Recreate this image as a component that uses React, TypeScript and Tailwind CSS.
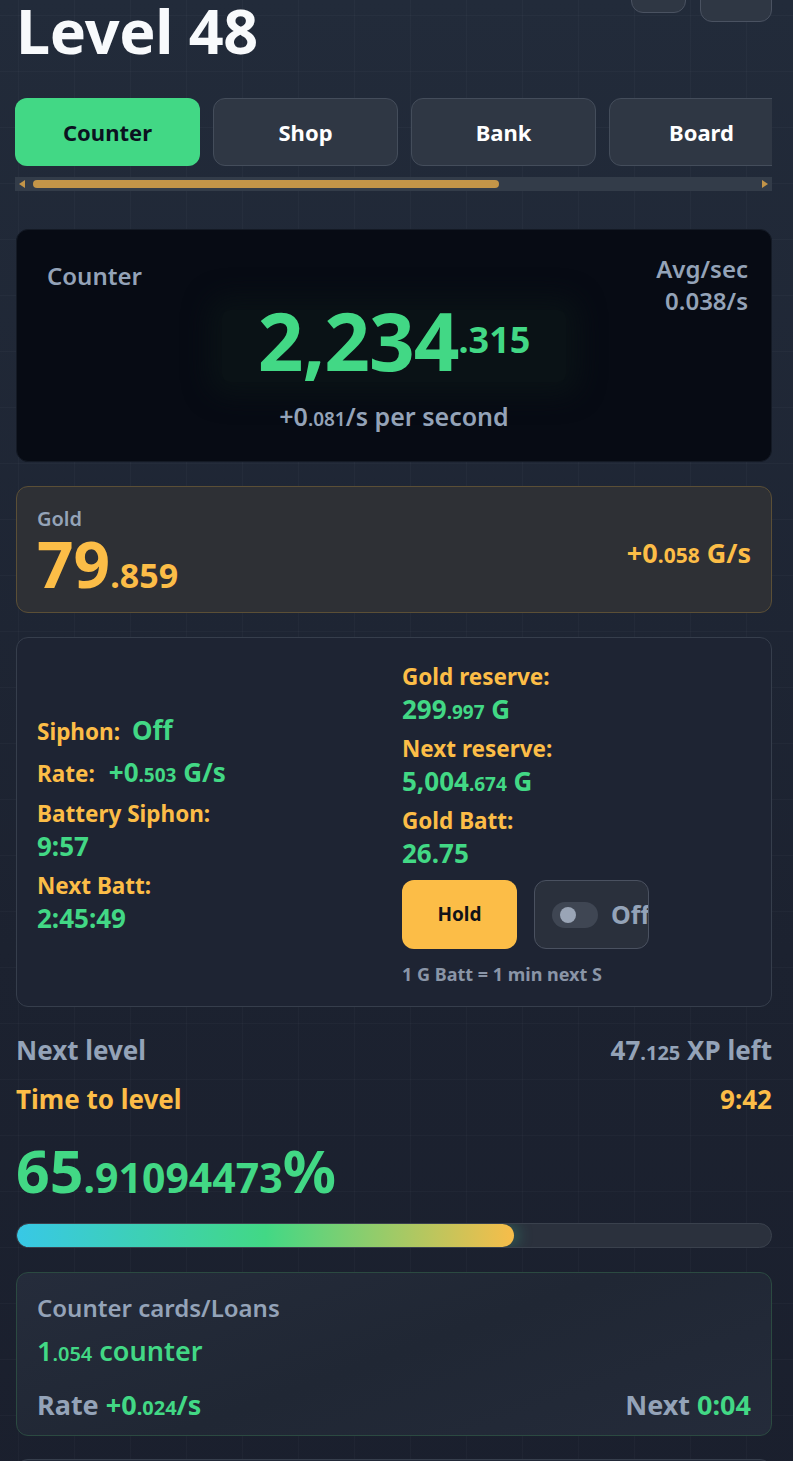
import React from "react";

const GREEN = "text-[#42d885]";
const GOLD = "text-[#fcbd47]";
const GRAY = "text-[#94a3b8]";

function Tab({ label, active }: { label: string; active?: boolean }) {
  return (
    <div
      className={
        active
          ? "shrink-0 w-[185px] h-[68px] rounded-xl bg-[#42d885] flex items-center justify-center text-[22px] font-bold text-[#0b1220]"
          : "shrink-0 w-[185px] h-[68px] rounded-xl bg-[#2f3744] border border-[#444d5b] flex items-center justify-center text-[22px] font-bold text-white"
      }
    >
      {label}
    </div>
  );
}

function Field({ label, children, last }: { label: string; children: React.ReactNode; last?: boolean }) {
  return (
    <div className={last ? "" : "mb-2"}>
      <div className={`${GOLD} text-[22.5px] font-bold leading-[32px] h-[32px]`}>{label}</div>
      <div className={`${GREEN} text-[26px] font-bold leading-[32px] h-[32px]`}>{children}</div>
    </div>
  );
}

function Small({ children, cls }: { children: React.ReactNode; cls: string }) {
  return <span className={`${cls} leading-none`}>{children}</span>;
}

export default function App() {
  return (
    <div
      className="min-h-screen w-full bg-[linear-gradient(180deg,#222b3a_0%,#1c2230_60%,#1a1f2d_100%)] overflow-hidden"
      style={{ fontFamily: '"Noto Sans", "Open Sans", sans-serif' }}
    >
      <div className="min-h-screen bg-[linear-gradient(rgba(255,255,255,0.022)_1px,transparent_1px),linear-gradient(90deg,rgba(255,255,255,0.022)_1px,transparent_1px)] bg-[size:56px_56px] bg-[position:18px_15px]">
        <div className="pl-4 pr-[21px]">
          {/* Header */}
          <div className="flex items-start justify-between">
            <h1 className="text-[61px] font-bold leading-none text-[#f8fafc] tracking-[-0.3px] whitespace-nowrap">Level 48</h1>
            <div className="flex items-start gap-[14px] -mt-[30px]">
              <div className="w-[55px] h-[43px] rounded-xl bg-[#2f3744] border border-[#4a5261]" />
              <div className="w-[72px] h-[52px] rounded-xl bg-[#2f3744] border border-[#4a5261]" />
            </div>
          </div>

          {/* Tabs */}
          <div className="mt-[37px] -ml-px overflow-hidden">
            <div className="flex gap-[13px] w-[757px] overflow-hidden">
              <Tab label="Counter" active />
              <Tab label="Shop" />
              <Tab label="Bank" />
              <Tab label="Board" />
            </div>
            <div className="mt-[11px] h-[14px] w-[757px] bg-[#333c49] flex items-center px-[4px]">
              <div className="w-0 h-0 border-y-[4px] border-y-transparent border-r-[6px] border-r-[#c39548]" />
              <div className="ml-[8px] w-[466px] h-[8px] rounded-full bg-[#c39548]" />
              <div className="flex-1" />
              <div className="w-0 h-0 border-y-[4px] border-y-transparent border-l-[6px] border-l-[#c39548]" />
            </div>
          </div>

          {/* Counter card */}
          <div className="mt-[38px] h-[233px] rounded-xl bg-[#070b14] border border-[#141a25] pl-[30px] pr-[23px] pt-[23px]">
            <div className="flex justify-between items-start">
              <div className={`${GRAY} text-[24px] font-semibold leading-[32px] mt-[7px]`}>Counter</div>
              <div className={`${GRAY} text-[24px] font-semibold leading-[32px] text-right`}>
                <div>Avg/sec</div>
                <div>0.038/s</div>
              </div>
            </div>
            <div className="flex justify-center -mt-[7px] pr-[7px]">
              <div className="px-[36px] h-[72px] flex items-end bg-[#0a1216] shadow-[0_0_24px_14px_#0a1216] rounded-lg">
                <span className={`${GREEN} text-[80px] font-bold leading-[84px] tracking-[-1px]`}>2,234</span>
                <span className={`${GREEN} text-[36px] font-bold leading-[84px]`}>.315</span>
              </div>
            </div>
            <div className={`${GRAY} text-center text-[25px] font-semibold leading-[32px] mt-[18px] pr-[7px]`}>
              +0<Small cls="text-[19px]">.081</Small>/s per second
            </div>
          </div>

          {/* Gold card */}
          <div className="mt-[24px] h-[127px] rounded-xl bg-[#2e3035] border border-[#5b4f36] pl-[20px] pr-[20px] pt-[19px] flex justify-between">
            <div>
              <div className={`${GRAY} text-[20px] font-semibold leading-[26px]`}>Gold</div>
              <div className={`${GOLD} font-bold leading-[64px]`}>
                <span className="text-[64px]">79</span>
                <Small cls="text-[34px]">.859</Small>
              </div>
            </div>
            <div className={`${GOLD} font-bold text-[27px] leading-[30px] mt-[32px]`}>
              +0<Small cls="text-[21px]">.058</Small> G/s
            </div>
          </div>

          {/* Siphon card */}
          <div className="mt-[24px] rounded-xl bg-[#1e2433] border border-[#363e4c] px-5 pt-[23px] pb-[22px] grid grid-cols-2 gap-4">
            <div className="flex flex-col justify-center pt-[3px]">
              <div className="mb-[10px] flex items-baseline h-[32px] leading-[32px] font-bold">
                <span className={`${GOLD} text-[22.5px]`}>Siphon:</span>
                <span className={`${GREEN} ml-[12px] text-[26px]`}>Off</span>
              </div>
              <div className="mb-[10px] flex items-baseline h-[32px] leading-[32px] font-bold">
                <span className={`${GOLD} text-[22.5px]`}>Rate:</span>
                <span className={`${GREEN} ml-[14px] text-[26px]`}>
                  +0<Small cls="text-[19px]">.503</Small> G/s
                </span>
              </div>
              <Field label="Battery Siphon:">9:57</Field>
              <Field label="Next Batt:" last>
                2:45:49
              </Field>
            </div>
            <div>
              <Field label="Gold reserve:">
                299<Small cls="text-[19px]">.997</Small> G
              </Field>
              <Field label="Next reserve:">
                5,004<Small cls="text-[19px]">.674</Small> G
              </Field>
              <Field label="Gold Batt:" last>
                26.75
              </Field>
              <div className="mt-[11px] flex gap-[17px]">
                <div className="w-[115px] h-[69px] rounded-xl bg-[#fcbd47] flex items-center justify-center text-[19px] font-bold text-[#111318]">
                  Hold
                </div>
                <div className="w-[115px] h-[69px] rounded-xl bg-[#2a303c] border border-[#4a5160] overflow-hidden flex items-center pl-[17px]">
                  <div className="shrink-0 w-[46px] h-[26px] rounded-full bg-[#3f4653] flex items-center pl-[8px]">
                    <div className="w-[16px] h-[16px] rounded-full bg-[#9aa5b6]" />
                  </div>
                  <span className="shrink-0 ml-[13px] text-[25px] font-bold text-[#94a3b8]">Off</span>
                </div>
              </div>
              <div className="mt-[15px] text-[18px] font-bold leading-[20px] text-[#8a95a7] whitespace-nowrap">1 G Batt = 1 min next S</div>
            </div>
          </div>

          {/* Level info */}
          <div className="mt-[28px] flex justify-between items-center text-[26px] font-bold leading-[30px]">
            <span className={GRAY}>Next level</span>
            <span className={GRAY}>
              47<Small cls="text-[20px]">.125</Small> XP left
            </span>
          </div>
          <div className="mt-[19px] flex justify-between items-center text-[26px] font-bold leading-[30px]">
            <span className={GOLD}>Time to level</span>
            <span className={GOLD}>9:42</span>
          </div>
          <div className={`${GREEN} mt-[24px] font-bold leading-[64px]`}>
            <span className="text-[59px]">65</span>
            <Small cls="text-[41px]">.91094473</Small>
            <span className="text-[59px]">%</span>
          </div>

          {/* Progress */}
          <div className="mt-[4px] h-[25px] rounded-full bg-[#2b313d] border border-[#3a414d] overflow-hidden">
            <div
              className="h-full rounded-full bg-[linear-gradient(90deg,#38c8e6_0%,#42d885_50%,#f7bd4a_100%)] shadow-[6px_0_14px_rgba(60,200,150,0.25)]"
              style={{ width: "65.91%" }}
            />
          </div>

          {/* Loans card */}
          <div className="mt-[24px] h-[164px] rounded-xl bg-[linear-gradient(160deg,#252c3b_0%,#202734_50%,#242b3a_100%)] border border-[#2b4a41] px-5 pt-[20px]">
            <div className={`${GRAY} text-[24px] font-semibold leading-[30px]`}>Counter cards/Loans</div>
            <div className={`${GREEN} mt-[12px] font-semibold leading-[32px]`}>
              <span className="text-[27px]">1</span>
              <Small cls="text-[20px]">.054</Small>
              <span className="text-[27px]"> counter</span>
            </div>
            <div className="mt-[18px] flex justify-between items-center font-bold leading-[32px]">
              <span className={`${GRAY} text-[27px]`}>
                Rate{" "}
                <span className={GREEN}>
                  +0<Small cls="text-[20px]">.024</Small>/s
                </span>
              </span>
              <span className={`${GRAY} text-[27px]`}>
                Next <span className={GREEN}>0:04</span>
              </span>
            </div>
          </div>

          <div className="mt-[23px] h-[120px] rounded-xl bg-[#222938] border border-[#363e4c]" />
        </div>
      </div>
    </div>
  );
}
